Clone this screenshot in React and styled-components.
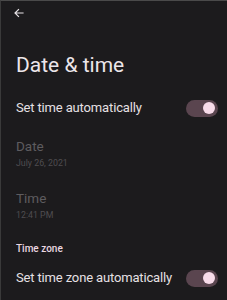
import styled, { createGlobalStyle } from 'styled-components'

const Global = createGlobalStyle`
  html, body { margin: 0; padding: 0; background: #1c1b1d; }
  * { box-sizing: border-box; }
`

const Screen = styled.div`
  width: 227px;
  height: 300px;
  background: #1c1b1d;
  border-top: 1px solid #4a4a4a;
  border-left: 1px solid #3a3a3a;
  font-family: Roboto, "Noto Sans", sans-serif;
  overflow: hidden;
  display: flex;
  flex-direction: column;
`

const TopBar = styled.div`
  height: 24px;
  display: flex;
  align-items: center;
  padding-left: 12px;
`

const Title = styled.h1`
  margin: 26px 0 0 15px;
  font-size: 21px;
  font-weight: 400;
  line-height: 28px;
  color: #ece6ea;
`

const Row = styled.div`
  display: flex;
  align-items: center;
  justify-content: space-between;
  padding: 0 9px 0 15px;
  height: 18px;
  margin-top: ${p => p.$mt}px;
`

const Label = styled.div`
  font-size: 13px;
  letter-spacing: -0.15px;
  white-space: nowrap;
  color: #e6e0e4;
  line-height: 18px;
`

const Item = styled.div`
  padding-left: 15px;
  margin-top: ${p => p.$mt}px;
  display: flex;
  flex-direction: column;
  gap: 4px;
`

const ItemTitle = styled.div`
  font-size: 13.5px;
  line-height: 16px;
  color: #5e5c5f;
`

const ItemSub = styled.div`
  font-size: 8.8px;
  line-height: 11px;
  color: #4f4d50;
`

const Section = styled.div`
  padding-left: 15px;
  margin-top: 22px;
  font-size: 10px;
  font-weight: 500;
  line-height: 12px;
  color: #ead8e1;
`

const Track = styled.div`
  width: 32px;
  height: 17px;
  border-radius: 9px;
  background: #5a454f;
  display: flex;
  align-items: center;
  justify-content: flex-end;
  padding-right: 3px;
`

const Thumb = styled.div`
  width: 12px;
  height: 12px;
  border-radius: 50%;
  background: #f8dcea;
`

const Toggle = () => (
  <Track>
    <Thumb />
  </Track>
)

const BackArrow = () => (
  <svg width="12" height="12" viewBox="0 0 24 24" fill="none" stroke="#e8e4e8" strokeWidth="2.4" strokeLinecap="square">
    <path d="M20 12H5M11 5l-7 7 7 7" />
  </svg>
)

export default function App() {
  return (
    <>
      <Global />
      <Screen>
        <TopBar>
          <BackArrow />
        </TopBar>
        <Title>Date &amp; time</Title>
        <Row $mt={20}>
          <Label>Set time automatically</Label>
          <Toggle />
        </Row>
        <Item $mt={21}>
          <ItemTitle>Date</ItemTitle>
          <ItemSub>July 26, 2021</ItemSub>
        </Item>
        <Item $mt={21}>
          <ItemTitle>Time</ItemTitle>
          <ItemSub>12:41 PM</ItemSub>
        </Item>
        <Section>Time zone</Section>
        <Row $mt={14}>
          <Label>Set time zone automatically</Label>
          <Toggle />
        </Row>
      </Screen>
    </>
  )
}
